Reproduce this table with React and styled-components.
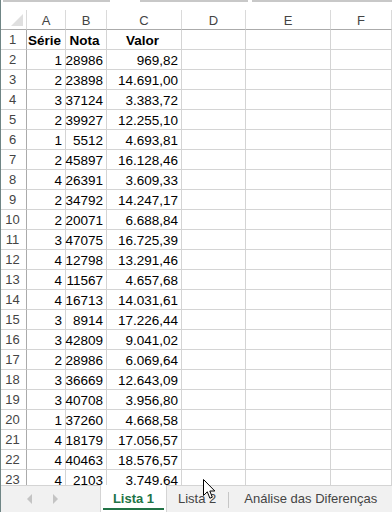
import React from "react";
import styled, { createGlobalStyle } from "styled-components";

const Global = createGlobalStyle`
  html, body { margin: 0; padding: 0; background: #fff; }
  body { font-family: "Liberation Sans", Arial, sans-serif; }
`;

const COLS = "26px 39px 41px 75px 64px 85px 1fr";

const rows = [
  [1, 28986, "969,82"],
  [2, 23898, "14.691,00"],
  [3, 37124, "3.383,72"],
  [2, 39927, "12.255,10"],
  [1, 5512, "4.693,81"],
  [2, 45897, "16.128,46"],
  [4, 26391, "3.609,33"],
  [2, 34792, "14.247,17"],
  [2, 20071, "6.688,84"],
  [3, 47075, "16.725,39"],
  [4, 12798, "13.291,46"],
  [4, 11567, "4.657,68"],
  [4, 16713, "14.031,61"],
  [3, 8914, "17.226,44"],
  [3, 42809, "9.041,02"],
  [2, 28986, "6.069,64"],
  [3, 36669, "12.643,09"],
  [3, 40708, "3.956,80"],
  [1, 37260, "4.668,58"],
  [4, 18179, "17.056,57"],
  [4, 40463, "18.576,57"],
  [4, 2103, "3.749,64"],
];

const Page = styled.div`
  width: 392px;
  height: 512px;
  display: flex;
  flex-direction: column;
  overflow: hidden;
  position: relative;
  border-left: 1px solid #6f8585;
  box-sizing: border-box;
`;

const TopStrip = styled.div`
  height: 10px;
  flex: none;
  display: flex;
`;

const TopLine = styled.div`
  height: 2px;
  background: #c8c8c8;
  width: ${(p) => p.$w};
  margin-left: ${(p) => p.$ml || "0px"};
`;

const Sheet = styled.div`
  flex: 1;
  overflow: hidden;
`;

const Row = styled.div`
  display: grid;
  grid-template-columns: ${COLS};
  height: 20px;
`;

const ColHead = styled.div`
  display: flex;
  align-items: center;
  justify-content: center;
  font-size: 13px;
  color: #444;
  border-bottom: 1px solid #ababab;
  border-right: 1px solid #dadada;
  box-sizing: border-box;
  padding-top: 1px;
`;

const Corner = styled.div`
  position: relative;
  border-bottom: 1px solid #ababab;
  border-right: 1px solid #dadada;
  box-sizing: border-box;
`;

const Triangle = styled.div`
  position: absolute;
  right: 3px;
  bottom: 3px;
  width: 0;
  height: 0;
  border-left: 12px solid transparent;
  border-bottom: 12px solid #dfdfdf;
`;

const RowHead = styled.div`
  display: flex;
  align-items: center;
  justify-content: center;
  font-size: 13px;
  color: #444;
  border-right: 1px solid #ababab;
  border-bottom: 1px solid #d4d4d4;
  box-sizing: border-box;
  padding-right: 2px;
`;

const Cell = styled.div`
  display: flex;
  align-items: center;
  justify-content: ${(p) => (p.$center ? "center" : "flex-end")};
  font-size: 13.5px;
  font-weight: ${(p) => (p.$bold ? 700 : 400)};
  color: #000;
  border-right: 1px solid #d4d4d4;
  border-bottom: 1px solid #d4d4d4;
  box-sizing: border-box;
  padding-right: 3px;
  padding-top: 1px;
  white-space: nowrap;
`;

const TabBar = styled.div`
  height: 27px;
  flex: none;
  background: #f1f1f1;
  border-top: 1px solid #d4d4d4;
  box-sizing: border-box;
  display: flex;
  align-items: stretch;
`;

const Nav = styled.div`
  width: 100px;
  flex: none;
  display: flex;
  align-items: center;
  padding-left: 26px;
  gap: 21px;
  box-sizing: border-box;
`;

const Arrow = styled.div`
  width: 0;
  height: 0;
  border-top: 5px solid transparent;
  border-bottom: 5px solid transparent;
  ${(p) =>
    p.$left
      ? "border-right: 5px solid #c4c4c4;"
      : "border-left: 5px solid #c4c4c4;"}
`;

const Tab = styled.div`
  flex: none;
  display: flex;
  align-items: center;
  justify-content: center;
  white-space: nowrap;
  font-size: 13px;
  padding: 0 ${(p) => p.$pad || "12px"};
  margin-top: -1px;
  color: ${(p) => (p.$active ? "#217346" : "#444")};
  font-weight: ${(p) => (p.$active ? 700 : 400)};
  background: ${(p) => (p.$active ? "#fff" : "transparent")};
  box-sizing: border-box;
  position: relative;
  ${(p) =>
    p.$active
      ? `box-shadow: 1px 0 0 #d4d4d4, -1px 0 0 #d4d4d4, 0 1px 0 #d4d4d4; width: 65px; padding: 0;`
      : ""}
`;

const Underline = styled.div`
  position: absolute;
  left: 2px;
  right: 2px;
  bottom: 2px;
  height: 2px;
  background: #217346;
`;

const Sep = styled.div`
  width: 1px;
  flex: none;
  background: #c6c6c6;
  margin: 6px 0 4px;
`;

const Cursor = styled.svg`
  position: absolute;
  left: 202px;
  top: 479px;
`;

export default function App() {
  return (
    <>
      <Global />
      <Page>
        <TopStrip>
          <TopLine $w="107px" $ml="2px" />
          <TopLine $w="109px" $ml="30px" />
          <TopLine $w="140px" $ml="4px" />
        </TopStrip>
        <Sheet>
          <Row>
            <Corner>
              <Triangle />
            </Corner>
            {["A", "B", "C", "D", "E", "F"].map((c) => (
              <ColHead key={c}>{c}</ColHead>
            ))}
          </Row>
          <Row>
            <RowHead>1</RowHead>
            <Cell $bold $center>Série</Cell>
            <Cell $bold $center>Nota</Cell>
            <Cell $bold $center>Valor</Cell>
            <Cell />
            <Cell />
            <Cell />
          </Row>
          {rows.map((r, i) => (
            <Row key={i}>
              <RowHead>{i + 2}</RowHead>
              <Cell>{r[0]}</Cell>
              <Cell>{r[1]}</Cell>
              <Cell>{r[2]}</Cell>
              <Cell />
              <Cell />
              <Cell />
            </Row>
          ))}
        </Sheet>
        <TabBar>
          <Nav>
            <Arrow $left />
            <Arrow />
          </Nav>
          <Tab $active>
            Lista 1
            <Underline />
          </Tab>
          <Tab>Lista 2</Tab>
          <Sep />
          <Tab $pad="15px">Análise das Diferenças</Tab>
          <Sep />
        </TabBar>
        <Cursor width="13" height="21" viewBox="0 0 13 21">
          <path
            d="M0.5 0.5 L0.5 16.5 L4.3 12.8 L6.9 19.2 L9.3 18.2 L6.8 12 L11.8 12 Z"
            fill="#fff"
            stroke="#000"
            strokeWidth="1"
            strokeLinejoin="miter"
          />
        </Cursor>
      </Page>
    </>
  );
}
